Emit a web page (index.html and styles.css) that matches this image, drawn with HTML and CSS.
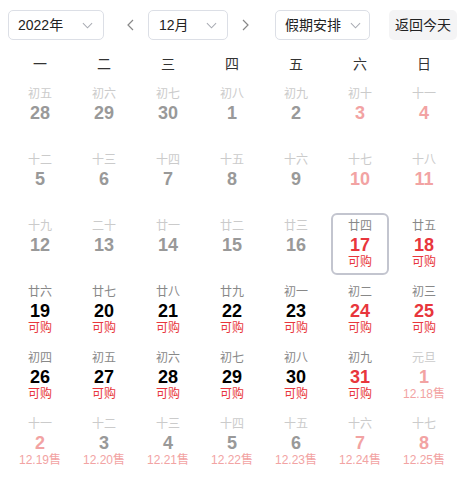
FILE: index.html
```html
<!DOCTYPE html>
<html lang="zh">
<head>
<meta charset="utf-8">
<title>日历</title>
<link rel="stylesheet" href="styles.css">
</head>
<body>
<div class="toolbar">
  <div class="select year"><span>2022年</span><svg class="chev" viewBox="0 0 12 7"><path d="M1 1l5 5 5-5"/></svg></div>
  <svg class="arrow prev" viewBox="0 0 7 12"><path d="M6 1L1 6l5 5"/></svg>
  <div class="select month"><span>12月</span><svg class="chev" viewBox="0 0 12 7"><path d="M1 1l5 5 5-5"/></svg></div>
  <svg class="arrow next" viewBox="0 0 7 12"><path d="M1 1l5 5-5 5"/></svg>
  <div class="select holiday"><span>假期安排</span><svg class="chev" viewBox="0 0 12 7"><path d="M1 1l5 5 5-5"/></svg></div>
  <div class="today">返回今天</div>
</div>
<div class="weekdays">
  <div>一</div><div>二</div><div>三</div><div>四</div><div>五</div><div>六</div><div>日</div>
</div>
<div class="grid">
  <div class="cell off"><div class="lunar">初五</div><div class="num">28</div></div>
  <div class="cell off"><div class="lunar">初六</div><div class="num">29</div></div>
  <div class="cell off"><div class="lunar">初七</div><div class="num">30</div></div>
  <div class="cell off"><div class="lunar">初八</div><div class="num">1</div></div>
  <div class="cell off"><div class="lunar">初九</div><div class="num">2</div></div>
  <div class="cell off rest"><div class="lunar">初十</div><div class="num">3</div></div>
  <div class="cell off rest"><div class="lunar">十一</div><div class="num">4</div></div>

  <div class="cell off"><div class="lunar">十二</div><div class="num">5</div></div>
  <div class="cell off"><div class="lunar">十三</div><div class="num">6</div></div>
  <div class="cell off"><div class="lunar">十四</div><div class="num">7</div></div>
  <div class="cell off"><div class="lunar">十五</div><div class="num">8</div></div>
  <div class="cell off"><div class="lunar">十六</div><div class="num">9</div></div>
  <div class="cell off rest"><div class="lunar">十七</div><div class="num">10</div></div>
  <div class="cell off rest"><div class="lunar">十八</div><div class="num">11</div></div>

  <div class="cell off"><div class="lunar">十九</div><div class="num">12</div></div>
  <div class="cell off"><div class="lunar">二十</div><div class="num">13</div></div>
  <div class="cell off"><div class="lunar">廿一</div><div class="num">14</div></div>
  <div class="cell off"><div class="lunar">廿二</div><div class="num">15</div></div>
  <div class="cell off"><div class="lunar">廿三</div><div class="num">16</div></div>
  <div class="cell on red selected"><div class="lunar">廿四</div><div class="num">17</div><div class="sub">可购</div></div>
  <div class="cell on red"><div class="lunar">廿五</div><div class="num">18</div><div class="sub">可购</div></div>

  <div class="cell on"><div class="lunar">廿六</div><div class="num">19</div><div class="sub">可购</div></div>
  <div class="cell on"><div class="lunar">廿七</div><div class="num">20</div><div class="sub">可购</div></div>
  <div class="cell on"><div class="lunar">廿八</div><div class="num">21</div><div class="sub">可购</div></div>
  <div class="cell on"><div class="lunar">廿九</div><div class="num">22</div><div class="sub">可购</div></div>
  <div class="cell on"><div class="lunar">初一</div><div class="num">23</div><div class="sub">可购</div></div>
  <div class="cell on red"><div class="lunar">初二</div><div class="num">24</div><div class="sub">可购</div></div>
  <div class="cell on red"><div class="lunar">初三</div><div class="num">25</div><div class="sub">可购</div></div>

  <div class="cell on"><div class="lunar">初四</div><div class="num">26</div><div class="sub">可购</div></div>
  <div class="cell on"><div class="lunar">初五</div><div class="num">27</div><div class="sub">可购</div></div>
  <div class="cell on"><div class="lunar">初六</div><div class="num">28</div><div class="sub">可购</div></div>
  <div class="cell on"><div class="lunar">初七</div><div class="num">29</div><div class="sub">可购</div></div>
  <div class="cell on"><div class="lunar">初八</div><div class="num">30</div><div class="sub">可购</div></div>
  <div class="cell on red"><div class="lunar">初九</div><div class="num">31</div><div class="sub">可购</div></div>
  <div class="cell off rest sale"><div class="lunar">元旦</div><div class="num">1</div><div class="sub">12.18售</div></div>

  <div class="cell off rest sale"><div class="lunar">十一</div><div class="num">2</div><div class="sub">12.19售</div></div>
  <div class="cell off sale"><div class="lunar">十二</div><div class="num">3</div><div class="sub">12.20售</div></div>
  <div class="cell off sale"><div class="lunar">十三</div><div class="num">4</div><div class="sub">12.21售</div></div>
  <div class="cell off sale"><div class="lunar">十四</div><div class="num">5</div><div class="sub">12.22售</div></div>
  <div class="cell off sale"><div class="lunar">十五</div><div class="num">6</div><div class="sub">12.23售</div></div>
  <div class="cell off rest sale"><div class="lunar">十六</div><div class="num">7</div><div class="sub">12.24售</div></div>
  <div class="cell off rest sale"><div class="lunar">十七</div><div class="num">8</div><div class="sub">12.25售</div></div>
</div>
</body>
</html>
```

FILE: styles.css
```css
* { box-sizing: border-box; }
html, body { background: #fff; }
body {
  margin: 0;
  padding: 10px 8px 0 8px;
  width: 472px;
  font-family: "Liberation Sans", Arial, "Noto Sans CJK SC", sans-serif;
  color: #333;
}
.toolbar {
  display: flex;
  align-items: center;
  height: 30px;
}
.select {
  height: 30px;
  border: 1px solid #dcdfe6;
  border-radius: 5px;
  display: flex;
  align-items: center;
  justify-content: space-between;
  padding: 0 10px 0 9px;
  font-size: 14px;
  color: #222;
}
.select span { line-height: 28px; }
.year { width: 96px; }
.month { width: 80px; padding-left: 10px; }
.holiday { width: 95px; padding-right: 8px; }
.chev {
  width: 11px;
  height: 7px;
  fill: none;
  stroke: #a8abb2;
  stroke-width: 1.1;
}
.arrow {
  width: 7px;
  height: 12px;
  fill: none;
  stroke: #888;
  stroke-width: 1.2;
}
.prev { margin: 0 14px 0 23px; }
.next { margin: 0 26px 0 14px; }
.today {
  margin-left: 19px;
  height: 30px;
  line-height: 30px;
  padding: 0 6px;
  background: #f4f4f5;
  border-radius: 5px;
  font-size: 14px;
  color: #222;
}
.weekdays {
  display: grid;
  grid-template-columns: repeat(7, 64px);
  margin-top: 12px;
  height: 24px;
  line-height: 24px;
  font-size: 14px;
  text-align: center;
  color: #333;
}
.grid {
  display: grid;
  grid-template-columns: repeat(7, 64px);
  grid-auto-rows: 62px;
  row-gap: 4px;
  margin-top: 5px;
}
.cell {
  margin: 0 3px;
  border: 2px solid transparent;
  border-radius: 6px;
  padding-top: 3px;
  text-align: center;
}
.cell.selected { border-color: #c3c5cf; }
.lunar {
  font-size: 12px;
  line-height: 17px;
  color: #888;
}
.num {
  font-size: 18px;
  font-weight: bold;
  line-height: 20px;
  color: #000;
}
.sub {
  font-size: 12px;
  line-height: 14px;
  color: #e8363c;
}
.red .num { color: #e8363c; }
.off .lunar { color: #cbcbcb; }
.off .num { color: #999; }
.off.rest .num { color: #f2a3a3; }
.sale .sub { color: #f2a3a3; }
```
